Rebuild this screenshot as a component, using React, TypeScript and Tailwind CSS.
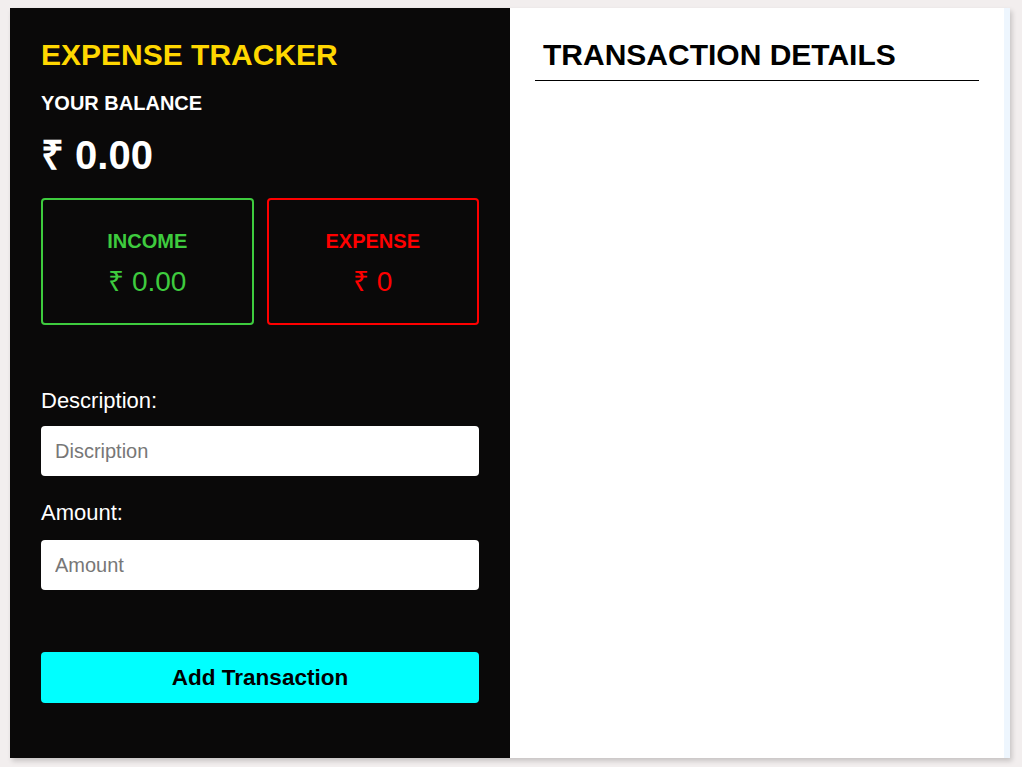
export default function App() {
	return (
		<div className="min-h-screen bg-[#f2eeee] pt-2 pl-2.5 font-['Liberation_Sans',Arial,sans-serif]">
			<div className="flex w-[1000px] h-[750px] shadow-[2px_3px_5px_rgba(0,0,0,0.18)]">
				{/* Left: balance + form */}
				<div className="w-[500px] h-full bg-[#0a0909] px-[31px] pt-[30px]">
					<h1 className="text-[30px] leading-[34px] font-bold text-[#ffd700]">EXPENSE TRACKER</h1>
					<h3 className="mt-[20px] text-[20px] leading-[22px] font-bold text-white">YOUR BALANCE</h3>
					<div className="mt-[19px] text-[40px] leading-[44px] font-bold text-white">₹ 0.00</div>

					<div className="mt-[21px] flex gap-[13px]">
						<div className="w-[213px] h-[127px] pt-[4px] rounded-[4px] border-2 border-[#3ecb3e] flex flex-col items-center justify-center">
							<div className="text-[20px] leading-[22px] font-bold text-[#3ecb3e]">INCOME</div>
							<div className="mt-[15px] text-[28px] leading-[30px] text-[#3ecb3e]">₹ 0.00</div>
						</div>
						<div className="w-[213px] h-[127px] pt-[4px] rounded-[4px] border-2 border-[#ff0000] flex flex-col items-center justify-center">
							<div className="text-[20px] leading-[22px] font-bold text-[#ff0000]">EXPENSE</div>
							<div className="mt-[15px] text-[28px] leading-[30px] text-[#ff0000]">₹ 0</div>
						</div>
					</div>

					<label className="block mt-[64px] text-[22px] leading-[24px] text-white">Description:</label>
					<input
						type="text"
						placeholder="Discription"
						className="mt-[13px] w-full h-[50px] rounded-[4px] bg-white px-[14px] text-[20px] text-black placeholder:text-[#777] outline-none"
					/>
					<label className="block mt-[25px] text-[22px] leading-[24px] text-white">Amount:</label>
					<input
						type="text"
						placeholder="Amount"
						className="mt-[15px] w-full h-[50px] rounded-[4px] bg-white px-[14px] text-[20px] text-black placeholder:text-[#777] outline-none"
					/>
					<button className="mt-[62px] w-full h-[51px] rounded-[4px] bg-[#00ffff] text-[22.5px] font-bold text-black">
						Add Transaction
					</button>
				</div>

				{/* Right: list */}
				<div className="flex-1 h-full bg-white pl-[25px] pr-[25px] pt-[30px]">
					<h2 className="pl-[8px] pb-[8px] border-b border-black text-[30px] leading-[34px] font-bold text-black">
						TRANSACTION DETAILS
					</h2>
				</div>
				<div className="w-[6px] h-full bg-[#eef6fe]" />
			</div>
		</div>
	);
}
